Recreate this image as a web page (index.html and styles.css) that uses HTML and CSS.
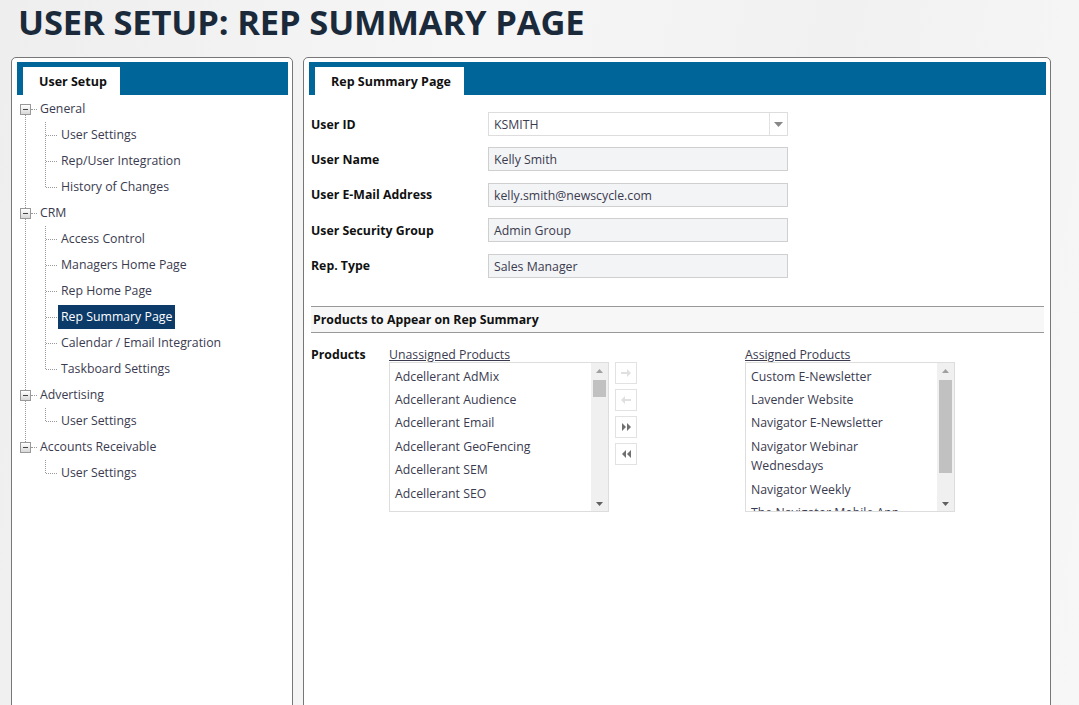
FILE: index.html
```html
<!DOCTYPE html>
<html>
<head>
<meta charset="utf-8">
<link rel="stylesheet" href="styles.css">
</head>
<body>
<h1 class="title">USER SETUP: REP SUMMARY PAGE</h1>
<div class="panels">
  <div class="panel panel-left">
    <div class="tabbar"><div class="tab">User Setup</div></div>
    <div class="tree">
      <div class="node">
        <div class="row root"><span class="exp"></span><span class="label">General</span></div>
        <div class="children">
          <div class="row child"><span class="label">User Settings</span></div>
          <div class="row child"><span class="label">Rep/User Integration</span></div>
          <div class="row child"><span class="label">History of Changes</span></div>
        </div>
      </div>
      <div class="node">
        <div class="row root"><span class="exp"></span><span class="label">CRM</span></div>
        <div class="children">
          <div class="row child"><span class="label">Access Control</span></div>
          <div class="row child"><span class="label">Managers Home Page</span></div>
          <div class="row child"><span class="label">Rep Home Page</span></div>
          <div class="row child"><span class="label selected">Rep Summary Page</span></div>
          <div class="row child"><span class="label">Calendar / Email Integration</span></div>
          <div class="row child"><span class="label">Taskboard Settings</span></div>
        </div>
      </div>
      <div class="node">
        <div class="row root"><span class="exp"></span><span class="label">Advertising</span></div>
        <div class="children">
          <div class="row child"><span class="label">User Settings</span></div>
        </div>
      </div>
      <div class="node">
        <div class="row root"><span class="exp"></span><span class="label">Accounts Receivable</span></div>
        <div class="children">
          <div class="row child"><span class="label">User Settings</span></div>
        </div>
      </div>
    </div>
  </div>

  <div class="panel panel-right">
    <div class="tabbar"><div class="tab tab-wide">Rep Summary Page</div></div>
    <div class="form">
      <div class="field">
        <div class="flabel">User ID</div>
        <div class="select"><span class="select-val">KSMITH</span><span class="select-btn"><svg width="9" height="5" viewBox="0 0 9 5"><polygon points="0,0 9,0 4.5,5" fill="#888"/></svg></span></div>
      </div>
      <div class="field">
        <div class="flabel">User Name</div>
        <div class="input">Kelly Smith</div>
      </div>
      <div class="field">
        <div class="flabel">User E-Mail Address</div>
        <div class="input">kelly.smith@newscycle.com</div>
      </div>
      <div class="field">
        <div class="flabel">User Security Group</div>
        <div class="input">Admin Group</div>
      </div>
      <div class="field">
        <div class="flabel">Rep. Type</div>
        <div class="input">Sales Manager</div>
      </div>
    </div>

    <div class="section-head">Products to Appear on Rep Summary</div>

    <div class="products">
      <div class="plabel">Products</div>
      <div class="pcol pcol-un">
        <div class="plist-title">Unassigned Products</div>
        <div class="listbox">
          <div class="items">
            <div class="item">Adcellerant AdMix</div>
            <div class="item">Adcellerant Audience</div>
            <div class="item">Adcellerant Email</div>
            <div class="item">Adcellerant GeoFencing</div>
            <div class="item">Adcellerant SEM</div>
            <div class="item">Adcellerant SEO</div>
          </div>
          <div class="scroll">
            <svg class="sarrow" width="7" height="4" viewBox="0 0 7 4"><polygon points="0,4 7,4 3.5,0" fill="#a0a0a0"/></svg>
            <div class="track"><div class="thumb thumb-short"></div></div>
            <svg class="sarrow" width="7" height="4" viewBox="0 0 7 4"><polygon points="0,0 7,0 3.5,4" fill="#606060"/></svg>
          </div>
        </div>
      </div>
      <div class="btns">
        <div class="btn"><svg width="10" height="8" viewBox="0 0 10 8"><path d="M0 3h6V0l4 4-4 4V5H0z" fill="#e0e0e0"/></svg></div>
        <div class="btn"><svg width="10" height="8" viewBox="0 0 10 8"><path d="M10 3H4V0L0 4l4 4V5h6z" fill="#e0e0e0"/></svg></div>
        <div class="btn"><svg width="9" height="8" viewBox="0 0 9 8"><path d="M0 0l4 4-4 4zM5 0l4 4-4 4z" fill="#707070"/></svg></div>
        <div class="btn"><svg width="9" height="8" viewBox="0 0 9 8"><path d="M4 0L0 4l4 4zM9 0L5 4l4 4z" fill="#707070"/></svg></div>
      </div>
      <div class="pcol pcol-as">
        <div class="plist-title">Assigned Products</div>
        <div class="listbox">
          <div class="items">
            <div class="item">Custom E-Newsletter</div>
            <div class="item">Lavender Website</div>
            <div class="item">Navigator E-Newsletter</div>
            <div class="item">Navigator Webinar<br>Wednesdays</div>
            <div class="item">Navigator Weekly</div>
            <div class="item">The Navigator Mobile App</div>
          </div>
          <div class="scroll">
            <svg class="sarrow" width="7" height="4" viewBox="0 0 7 4"><polygon points="0,4 7,4 3.5,0" fill="#a0a0a0"/></svg>
            <div class="track"><div class="thumb thumb-long"></div></div>
            <svg class="sarrow" width="7" height="4" viewBox="0 0 7 4"><polygon points="0,0 7,0 3.5,4" fill="#606060"/></svg>
          </div>
        </div>
      </div>
    </div>
  </div>
</div>
</body>
</html>
```

FILE: styles.css
```css
html, body {
  margin: 0;
  padding: 0;
  height: 100%;
  overflow: hidden;
}
body {
  background: linear-gradient(100deg, #eeeeee 0%, #f6f6f6 40%, #f1f1f1 70%, #f7f7f7 100%);
  font-family: "Open Sans", "Noto Sans", sans-serif;
  font-size: 12.3px;
  color: #3b3b4f;
}
.title {
  margin: 0;
  padding: 0 0 0 18px;
  height: 56px;
  box-sizing: border-box;
  font-family: "Open Sans", sans-serif;
  font-weight: 700;
  font-size: 34.5px;
  letter-spacing: -0.15px;
  line-height: 44px;
  color: #1b2a3b;
}
.panels {
  display: flex;
  gap: 10px;
  padding-left: 11px;
  padding-top: 1px;
}
.panel {
  background: #fff;
  border: 1px solid #777;
  border-radius: 5px;
  height: 700px;
  padding: 4px 4px 0 5px;
  box-sizing: border-box;
}
.panel-left { width: 282px; }
.panel-right { width: 748px; padding-right: 4px; }
.tabbar {
  background: #006699;
  height: 33px;
  padding: 5px 0 0 6px;
  box-sizing: border-box;
  display: flex;
}
.tab {
  background: #fff;
  height: 28px;
  line-height: 29px;
  width: 97px;
  box-sizing: border-box;
  padding-left: 16px;
  font-weight: 700;
  font-size: 12.5px;
  color: #111;
}
.tab-wide { width: 149px; }

/* tree */
.tree {
  position: relative;
  padding-left: 3px;
  padding-top: 1px;
}
.tree::before {
  content: "";
  position: absolute;
  left: 8px;
  top: 19px;
  height: 338px;
  border-left: 1px dotted #999;
}
.row {
  height: 26px;
  display: flex;
  align-items: center;
  position: relative;
}
.exp {
  width: 11px;
  height: 11px;
  box-sizing: border-box;
  border: 1px solid #999;
  background: linear-gradient(#ffffff, #d8d8d8);
  position: relative;
  z-index: 1;
  flex: none;
}
.exp::after {
  content: "";
  position: absolute;
  left: 2px;
  top: 4px;
  width: 5px;
  height: 1px;
  background: #444;
}
.root .label { margin-left: 6px; }
.root::before {
  content: "";
  position: absolute;
  left: 11px;
  top: 13px;
  width: 6px;
  border-top: 1px dotted #999;
}
.label {
  display: inline-block;
  height: 24px;
  line-height: 24px;
  padding: 0 3px;
  white-space: nowrap;
}
.label.selected {
  background: #0d3b69;
  color: #fff;
}
.children {
  position: relative;
  margin-left: 25px;
}
.children::before {
  content: "";
  position: absolute;
  left: 0;
  top: 0;
  bottom: 13px;
  border-left: 1px dotted #999;
}
.child { padding-left: 13px; }
.child::before {
  content: "";
  position: absolute;
  left: 1px;
  top: 13px;
  width: 11px;
  border-top: 1px dotted #999;
}

/* form */
.form {
  padding: 17px 0 0 2px;
  display: flex;
  flex-direction: column;
  gap: 11.4px;
}
.field {
  display: flex;
  align-items: center;
}
.flabel {
  width: 177px;
  font-weight: 700;
  color: #111;
  font-size: 12.3px;
}
.select, .input {
  width: 300px;
  height: 24px;
  box-sizing: border-box;
  border: 1px solid #d4d4d4;
  display: flex;
  align-items: center;
  color: #3b3b4f;
}
.select { background: #fff; border-color: #ddd; }
.input {
  background: #f3f4f6;
  border-color: #cfcfcf;
  padding-left: 5px;
  padding-top: 1px;
}
.select-val { flex: 1; padding-left: 5px; }
.select-btn {
  width: 17px;
  height: 100%;
  border-left: 1px solid #e2e2e2;
  display: flex;
  align-items: center;
  justify-content: center;
}

.section-head {
  margin: 28px 2px 0 2px;
  height: 27px;
  box-sizing: border-box;
  border-top: 1px solid #999;
  border-bottom: 1px solid #999;
  background: #f7f7f7;
  font-weight: 700;
  color: #111;
  line-height: 26px;
  padding-left: 2px;
}

.products {
  display: flex;
  padding: 12px 0 0 2px;
}
.plabel {
  width: 78px;
  font-weight: 700;
  color: #111;
  line-height: 19px;
}
.plist-title {
  text-decoration: underline;
  line-height: 19px;
  height: 17px;
  overflow: visible;
}
.pcol-un { width: 220px; }
.pcol-as { width: 210px; margin-left: 108px; }
.listbox {
  height: 150px;
  box-sizing: border-box;
  border: 1px solid #ddd;
  display: flex;
  background: #fff;
}
.items {
  flex: 1;
  overflow: hidden;
  padding-top: 2px;
}
.item {
  padding: 2px 5px;
  line-height: 19.4px;
  white-space: nowrap;
}
.scroll {
  width: 17px;
  background: #f0f0f0;
  display: flex;
  flex-direction: column;
  align-items: center;
  padding: 6px 0 5px;
  box-sizing: border-box;
}
.sarrow { flex: none; }
.track {
  flex: 1;
  width: 100%;
  padding: 7px 2px 0;
  box-sizing: border-box;
}
.thumb { background: #c1c1c1; width: 100%; }
.thumb-short { height: 17px; }
.thumb-long { height: 93px; }

.btns {
  display: flex;
  flex-direction: column;
  gap: 5px;
  margin: 17px 0 0 6px;
}
.btn {
  width: 22px;
  height: 22px;
  box-sizing: border-box;
  border: 1px solid #e2e2e2;
  background: #fff;
  display: flex;
  align-items: center;
  justify-content: center;
}
```
